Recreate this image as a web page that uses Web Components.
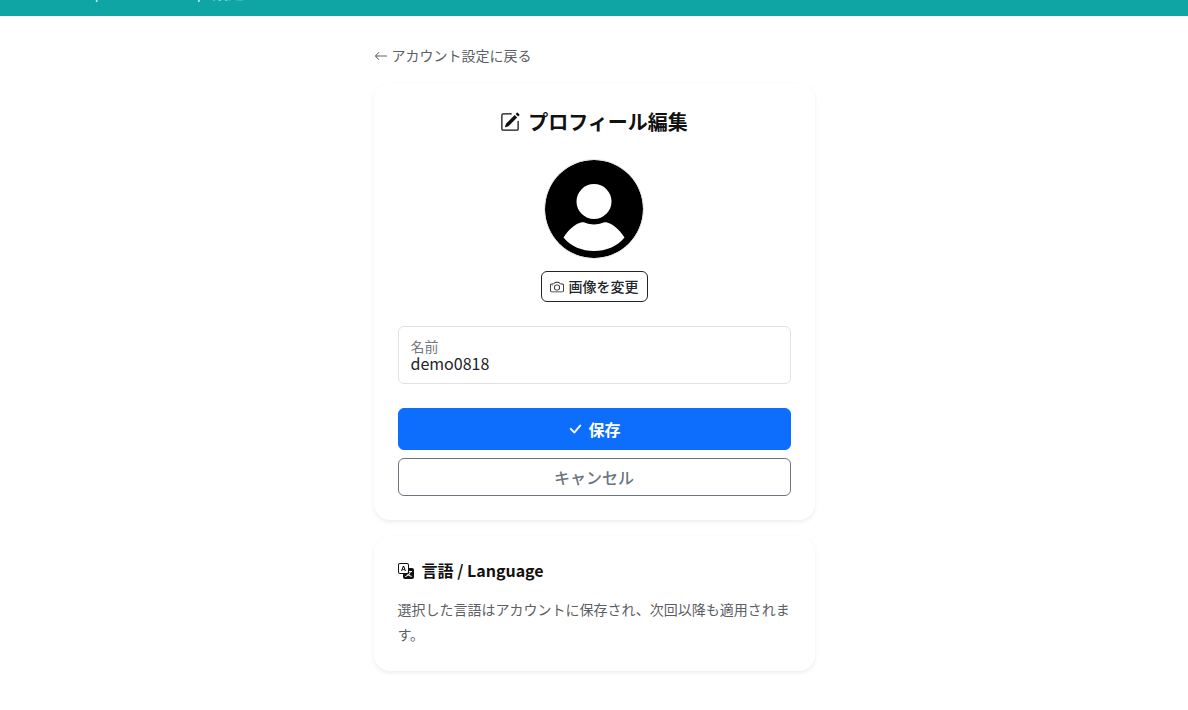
<!DOCTYPE html>
<html lang="ja">
<head>
<meta charset="utf-8">
<meta name="viewport" content="width=device-width, initial-scale=1">
<title>プロフィール編集</title>
<style>
body { margin: 0; background: #fff; color: #212529; font: 16px/24px "Noto Sans CJK JP", sans-serif; }
main { max-width: 441px; margin: 0 auto; padding: 29px 12px 39px; display: flex; flex-direction: column; gap: 16px; }
back-link { margin-bottom: 1px; }
</style>
</head>
<body>
<site-header></site-header>
<main>
  <back-link href="#account">アカウント設定に戻る</back-link>
  <profile-form name="demo0818"></profile-form>
  <language-card>
    <span slot="title">言語 / Language</span>
    選択した言語はアカウントに保存され、次回以降も適用されます。
  </language-card>
</main>
<script>
const define = (tag, html, setup) => customElements.define(tag, class extends HTMLElement {
  connectedCallback() {
    if (this.shadowRoot) return;
    const t = document.createElement('template');
    t.innerHTML = html;
    this.attachShadow({ mode: 'open' }).append(t.content.cloneNode(true));
    if (setup) setup(this, this.shadowRoot);
  }
});

const icons = {
  arrow: '<path fill-rule="evenodd" d="M15 8a.5.5 0 0 0-.5-.5H2.707l3.147-3.146a.5.5 0 1 0-.708-.708l-4 4a.5.5 0 0 0 0 .708l4 4a.5.5 0 0 0 .708-.708L2.707 8.5H14.5A.5.5 0 0 0 15 8"/>',
  pencil: '<path d="M15.502 1.94a.5.5 0 0 1 0 .706L14.459 3.69l-2-2L13.502.646a.5.5 0 0 1 .707 0l1.293 1.293zm-1.75 2.456-2-2L4.939 9.21a.5.5 0 0 0-.121.196l-.805 2.414a.25.25 0 0 0 .316.316l2.414-.805a.5.5 0 0 0 .196-.12l6.813-6.814z"/><path fill-rule="evenodd" d="M1 13.5A1.5 1.5 0 0 0 2.5 15h11a1.5 1.5 0 0 0 1.5-1.5v-6a.5.5 0 0 0-1 0v6a.5.5 0 0 1-.5.5h-11a.5.5 0 0 1-.5-.5v-11a.5.5 0 0 1 .5-.5H9a.5.5 0 0 0 0-1H2.500A1.5 1.5 0 0 0 1 2.500z"/>',
  camera: '<path d="M15 12a1 1 0 0 1-1 1H2a1 1 0 0 1-1-1V6a1 1 0 0 1 1-1h1.172a3 3 0 0 0 2.12-.879l.83-.828A1 1 0 0 1 6.827 3h2.344a1 1 0 0 1 .707.293l.828.828A3 3 0 0 0 12.828 5H14a1 1 0 0 1 1 1zM2 4a2 2 0 0 0-2 2v6a2 2 0 0 0 2 2h12a2 2 0 0 0 2-2V6a2 2 0 0 0-2-2h-1.172a2 2 0 0 1-1.414-.586l-.828-.828A2 2 0 0 0 9.172 2H6.828a2 2 0 0 0-1.414.586l-.828.828A2 2 0 0 1 3.172 4z"/><path d="M8 11a2.5 2.5 0 1 1 0-5 2.5 2.5 0 0 1 0 5m0 1a3.500 3.500 0 1 0 0-7 3.500 3.500 0 0 0 0 7M3 6.500a.5.5 0 1 1-1 0 .5.5 0 0 1 1 0"/>',
  check: '<path stroke="currentColor" stroke-width=".5" d="M12.736 3.970a.733.733 0 0 1 1.047 0c.286.289.29.756.01 1.050L7.880 12.010a.733.733 0 0 1-1.065.020L3.217 8.384a.757.757 0 0 1 0-1.060.733.733 0 0 1 1.047 0l3.052 3.093 5.400-6.425z"/>',
  translate: '<path d="M4.545 6.714 4.110 8H3l1.862-5h1.284L8 8H6.833l-.435-1.286zm1.634-.736L5.500 3.956h-.049l-.679 2.022z"/><path d="M0 2a2 2 0 0 1 2-2h7a2 2 0 0 1 2 2v3h3a2 2 0 0 1 2 2v7a2 2 0 0 1-2 2H7a2 2 0 0 1-2-2v-3H2a2 2 0 0 1-2-2zm2-1a1 1 0 0 0-1 1v7a1 1 0 0 0 1 1h7a1 1 0 0 0 1-1V2a1 1 0 0 0-1-1zm7.138 9.995q.289.451.63.846c-.748.575-1.673 1.001-2.768 1.292.178.217.451.635.555.867 1.125-.359 2.080-.844 2.886-1.494.777.665 1.739 1.165 2.930 1.472.133-.254.414-.673.629-.890-1.125-.253-2.057-.694-2.820-1.284.681-.747 1.222-1.651 1.621-2.757H14V8h-3v1.047h.765c-.318.844-.740 1.546-1.272 2.130a6 6 0 0 1-.415-.492 2 2 0 0 1-.940.310"/>'
};

define('ui-icon', `
<style>
:host { display: inline-flex; flex: none; width: 1em; height: 1em; }
svg { width: 100%; height: 100%; fill: currentColor; }
</style>
<svg viewBox="0 0 16 16" aria-hidden="true"></svg>`,
  (el, root) => { root.querySelector('svg').innerHTML = icons[el.getAttribute('name')]; });

define('site-header', `
<style>
:host { display: flex; align-items: flex-end; box-sizing: border-box; height: 16px; padding: 0 40px 12px; overflow: hidden; background: #10a5a5; color: #fff; }
nav { display: flex; gap: 8px; }
a { color: inherit; text-decoration: none; }
.current { opacity: .6; }
</style>
<nav aria-label="パンくずリスト"><a href="#home">ホーム</a><span>/</span><a href="#account">アカウント</a><span>/</span><span class="current">設定</span></nav>`);

define('back-link', `
<style>
:host { display: flex; font-size: 14px; line-height: 21px; }
a { display: inline-flex; align-items: center; gap: 4px; color: #5c6065; text-decoration: none; }
</style>
<a><ui-icon name="arrow"></ui-icon><slot></slot></a>`,
  (el, root) => { root.querySelector('a').href = el.getAttribute('href'); });

define('surface-card', `
<style>
:host { display: block; padding: 24px; border-radius: 16px; background: #fff; box-shadow: 0 2px 4px rgba(0, 0, 0, .075); }
</style>
<slot></slot>`);

define('user-avatar', `
<style>
:host { display: block; box-sizing: border-box; width: 100px; height: 100px; border: 1px solid #dee2e6; border-radius: 50%; overflow: hidden; }
svg { display: block; width: 100%; height: 100%; }
</style>
<svg viewBox="0 0 98 98" role="img" aria-label="プロフィール画像">
<circle cx="49" cy="49" r="49"/>
<circle cx="49" cy="41.500" r="17.500" fill="#fff"/>
<path fill="#fff" d="M18.500 77.500C24 69 30 64 36 62.500C40 61.500 41 64.500 49 64.500S58 61.500 62 62.500C68 64 74 69 79.500 77.500C72 86.500 61 91 49 91S26 86.500 18.500 77.500Z"/>
</svg>`);

define('profile-form', `
<style>
:host { display: block; }
h1 { display: flex; justify-content: center; align-items: center; gap: 8px; margin: 0 0 22px; color: #111; font-size: 20px; line-height: 30px; font-weight: 700; }
form { display: flex; flex-direction: column; }
.picture { display: flex; flex-direction: column; align-items: center; gap: 12px; margin-bottom: 24px; }
button { display: flex; align-items: center; justify-content: center; gap: 5px; box-sizing: border-box; margin: 0; border: 1px solid; border-radius: 6px; background: #fff; font: inherit; font-weight: 500; cursor: pointer; }
.change { height: 31px; padding: 0 8px; border-color: #212529; color: #212529; font-size: 14px; line-height: 21px; }
.field { display: flex; flex-direction: column; box-sizing: border-box; height: 58px; padding: 10px 12px 8px; margin-bottom: 24px; border: 1px solid #dee2e6; border-radius: 6px; }
label { color: #75797d; font-size: 14px; line-height: 18px; }
input { width: 100%; height: 16px; padding: 0; border: 0; outline: 0; background: none; color: #212529; font: inherit; line-height: 16px; }
.save { height: 42px; margin-bottom: 8px; border-color: #0d6efd; background: #0d6efd; color: #fff; font-weight: 700; }
.cancel { height: 38px; border-color: #6c757d; color: #6c757d; }
</style>
<surface-card>
  <h1><ui-icon name="pencil"></ui-icon>プロフィール編集</h1>
  <form>
    <div class="picture">
      <user-avatar></user-avatar>
      <button type="button" class="change"><ui-icon name="camera"></ui-icon>画像を変更</button>
    </div>
    <div class="field">
      <label for="name">名前</label>
      <input id="name" type="text" autocomplete="off">
    </div>
    <button type="submit" class="save"><ui-icon name="check"></ui-icon>保存</button>
    <button type="button" class="cancel">キャンセル</button>
  </form>
</surface-card>`,
  (el, root) => {
    root.querySelector('input').value = el.getAttribute('name');
    root.querySelector('form').addEventListener('submit', e => e.preventDefault());
  });

define('language-card', `
<style>
:host { display: block; }
h2 { display: flex; align-items: center; gap: 8px; margin: 0 0 16px; color: #111; font-size: 16px; line-height: 21px; font-weight: 700; }
p { margin: 0; color: #5c6065; font-size: 14px; line-height: 25px; }
</style>
<surface-card>
  <h2><ui-icon name="translate"></ui-icon><slot name="title"></slot></h2>
  <p><slot></slot></p>
</surface-card>`);
</script>
</body>
</html>
